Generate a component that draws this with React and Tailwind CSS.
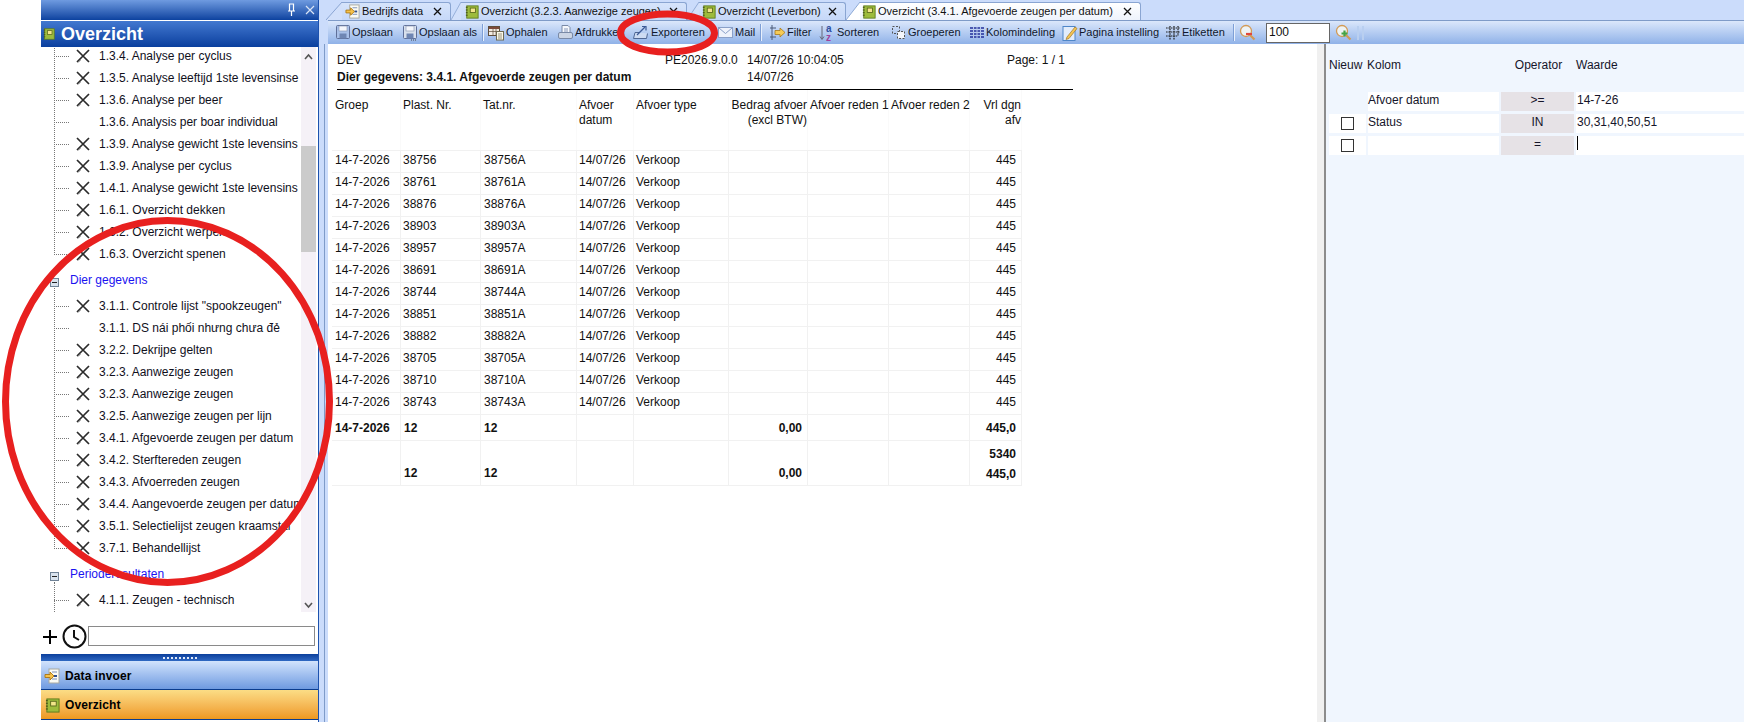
const FONT = "font-['Liberation_Sans',Arial,sans-serif]"

const Notebook = ({ size = 16 }) => (
  <svg width={size} height={size} viewBox="0 0 16 16" className="shrink-0">
    <rect x="2" y="1" width="13" height="14" fill="#9dbb3c" stroke="#5c7a1c" />
    <rect x="1" y="2" width="2" height="1.4" fill="#4c5c1c" />
    <rect x="1" y="5" width="2" height="1.4" fill="#4c5c1c" />
    <rect x="1" y="8" width="2" height="1.4" fill="#4c5c1c" />
    <rect x="1" y="11" width="2" height="1.4" fill="#4c5c1c" />
    <rect x="6" y="3.5" width="6" height="5" fill="#f2e58a" stroke="#5c6a1c" />
  </svg>
)

const DataIcon = ({ size = 16 }) => (
  <svg width={size} height={size} viewBox="0 0 16 16" className="shrink-0">
    <rect x="5" y="1" width="10" height="14" fill="#fbfbf4" stroke="#a9a9a0" />
    <path d="M8 4h5M8 11h5" stroke="#7b8fb8" />
    <path d="M10 7h3v2h-3z" fill="#33508c" />
    <path d="M1 6.500h5V4l4 4-4 4V9.500H1z" fill="#f6c24a" stroke="#a97412" strokeWidth="0.9" />
  </svg>
)

const CrossIcon = () => (
  <svg width="14" height="14" viewBox="0 0 14 14" className="shrink-0">
    <path d="M1 1 13 13M13 1 1 13" stroke="#2b2b2b" strokeWidth="1.700" />
    <path d="M2 13.500 4.500 11" stroke="#777" strokeWidth="1" />
  </svg>
)

const TabClose = ({ className = '' }) => (
  <svg width="9" height="9" viewBox="0 0 9 9" className={`shrink-0 ${className}`}>
    <path d="M1 1 8 8M8 1 1 8" stroke="#111" strokeWidth="1.300" />
  </svg>
)

function ToolIcon({ kind }) {
  if (kind === 'save' || kind === 'saveas')
    return (
      <svg width="16" height="17" viewBox="0 0 16 17">
        <rect x="1.500" y="1.500" width="13" height="13" rx="1" fill={kind === 'save' ? '#a9c0e8' : '#d8e0ec'} stroke="#5f6f98" />
        <rect x="4" y="2" width="8" height="5" fill="#f4f6fb" stroke="#8391ae" strokeWidth="0.6" />
        <rect x="4.500" y="9.500" width="7" height="5" fill="#6f86b3" />
        {kind === 'saveas' && <path d="M9 16h1M11 16h1M13 16h1" stroke="#444" />}
      </svg>
    )
  if (kind === 'fetch')
    return (
      <svg width="17" height="17" viewBox="0 0 17 17">
        <rect x="0.500" y="2.500" width="11" height="9" fill="#f2ece2" stroke="#5e4d3b" />
        <rect x="1" y="3" width="10" height="2" fill="#7d4a3a" />
        <path d="M1 7.500h10M5 5v6M8 5v6" stroke="#5e4d3b" strokeWidth="0.7" />
        <rect x="8.500" y="7.500" width="7" height="8.500" fill="#fbf8e8" stroke="#6e6a52" />
        <path d="M10 10h4M10 12h4M10 14h4" stroke="#6e6a52" strokeWidth="0.7" />
      </svg>
    )
  if (kind === 'print')
    return (
      <svg width="17" height="17" viewBox="0 0 17 17">
        <path d="M5 1.500h6l2 2v6H5z" fill="#f6f8fc" stroke="#7a8aa6" />
        <path d="M7 5h4M7 7h4" stroke="#6f82a8" strokeWidth="0.8" />
        <rect x="1.500" y="8.500" width="14" height="6" rx="1.500" fill="#ccd5e4" stroke="#7a8aa6" />
      </svg>
    )
  if (kind === 'export')
    return (
      <svg width="17" height="17" viewBox="0 0 17 17">
        <path d="M6 8.500H2L.500 14.500h13l1-5" fill="#cddbf2" stroke="#4f6794" />
        <path d="M4 11 12 3" stroke="#3c5a96" strokeWidth="1.200" />
        <path d="M9 2.500h4v4" fill="none" stroke="#3c5a96" strokeWidth="1.200" />
      </svg>
    )
  if (kind === 'mail')
    return (
      <svg width="16" height="14" viewBox="0 0 16 14">
        <rect x="0.500" y="1.500" width="14" height="10" fill="#eef2fb" stroke="#8aa0c8" />
        <path d="M1 2 7.500 7.500 14 2" fill="none" stroke="#8aa0c8" />
      </svg>
    )
  if (kind === 'filter')
    return (
      <svg width="17" height="17" viewBox="0 0 17 17">
        <path d="M3 1v15M1 4h6M1 13h6" stroke="#4a5a78" />
        <path d="M6 6.500h5V4l5 4.500-5 4.500v-2.500H6z" fill="#f6cb55" stroke="#a87a1c" strokeWidth="0.8" />
      </svg>
    )
  if (kind === 'sort')
    return (
      <svg width="17" height="18" viewBox="0 0 17 18">
        <path d="M3 2v13M1 12.500 3 15.500 5 12.500" fill="none" stroke="#667" />
        <text x="7" y="8" fontSize="10" fontWeight="700" fontFamily="Liberation Sans" fill="#2f4fa0">a</text>
        <text x="7" y="17" fontSize="10" fontWeight="700" fontFamily="Liberation Sans" fill="#a0409a">z</text>
      </svg>
    )
  if (kind === 'group')
    return (
      <svg width="16" height="16" viewBox="0 0 16 16">
        <rect x="1.500" y="1.500" width="7" height="7" fill="none" stroke="#555" strokeDasharray="2 1.500" />
        <rect x="6.500" y="6.500" width="7" height="7" fill="#f4f6fb" stroke="#555" strokeDasharray="2 1.500" />
      </svg>
    )
  if (kind === 'columns')
    return (
      <svg width="16" height="14" viewBox="0 0 16 14">
        <path d="M1 2h14M1 5h14M1 8h14M1 11h14" stroke="#25309a" strokeWidth="1.400" />
        <path d="M4.500 1v11M8 1v11M11.500 1v11" stroke="#b8c8ea" />
      </svg>
    )
  if (kind === 'page')
    return (
      <svg width="16" height="18" viewBox="0 0 16 18">
        <rect x="1" y="2.500" width="12" height="14" fill="#e2ecfb" stroke="#4f86c8" />
        <path d="M5 13 13 3l2 1.500L7 14.500l-3 1z" fill="#f4c553" stroke="#a0762a" strokeWidth="0.7" />
      </svg>
    )
  if (kind === 'labels')
    return (
      <svg width="16" height="16" viewBox="0 0 16 16">
        <path d="M1 3h14M1 7h14M1 11h12" stroke="#222" strokeWidth="1.200" strokeDasharray="1.600 0.800" />
        <path d="M5 1v14M9 1v14M13 1v10" stroke="#222" strokeWidth="1.200" strokeDasharray="1.600 0.800" />
      </svg>
    )
  return null
}

const Zoom = ({ plus }) => (
  <svg width="17" height="17" viewBox="0 0 17 17" className="shrink-0">
    <circle cx="7" cy="7" r="5.500" fill="#eef3f4" stroke="#d29a55" strokeWidth="1.300" />
    <path d="M11 11 15.500 15.500" stroke="#d29a55" strokeWidth="2.200" />
    {plus ? (
      <path d="M9.500 6.500v6M6.500 9.500h6" stroke="#45a345" strokeWidth="2.200" />
    ) : (
      <path d="M7 10h6" stroke="#e0473d" strokeWidth="2.200" />
    )}
  </svg>
)

const TOOLS = [
  { kind: 'save', label: 'Opslaan', w: 'w-[67px]' },
  { kind: 'saveas', label: 'Opslaan als', w: 'w-[81px]', sep: 'w-[6px]' },
  { kind: 'fetch', label: 'Ophalen', w: 'w-[69px]' },
  { kind: 'print', label: 'Afdrukken', w: 'w-[76px]' },
  { kind: 'export', label: 'Exporteren', w: 'w-[84px]' },
  { kind: 'mail', label: 'Mail', w: 'w-[43px]', sep: 'w-[9px]' },
  { kind: 'filter', label: 'Filter', w: 'w-[50px]' },
  { kind: 'sort', label: 'Sorteren', w: 'w-[71px]' },
  { kind: 'group', label: 'Groeperen', w: 'w-[78px]' },
  { kind: 'columns', label: 'Kolomindeling', w: 'w-[93px]' },
  { kind: 'page', label: 'Pagina instelling', w: 'w-[103px]' },
  { kind: 'labels', label: 'Etiketten', w: 'w-[69px]', sep: 'w-[6px]' },
]

const TABS = [
  { icon: 'data', label: 'Bedrijfs data', box: 'w-[109px] ml-[23px] pl-[3px]', slant: 'w-[16px] -left-[16px]' },
  { icon: 'note', label: 'Overzicht (3.2.3. Aanwezige zeugen)', box: 'w-[226px] ml-[10px] pl-[4px]', slant: 'w-[10px] -left-[10px]' },
  { icon: 'note', label: 'Overzicht (Leverbon)', box: 'w-[147px] ml-[12px] pl-[3px]', slant: 'w-[12px] -left-[12px]' },
  { icon: 'note', label: 'Overzicht (3.4.1. Afgevoerde zeugen per datum)', box: 'w-[281px] ml-[14px] pl-[2px]', slant: 'w-[14px] -left-[14px]', active: true },
]

const TREE_TOP = [
  ['1.3.4. Analyse per cyclus', true],
  ['1.3.5. Analyse leeftijd 1ste levensinse', true],
  ['1.3.6. Analyse per beer', true],
  ['1.3.6. Analysis per boar individual', false],
  ['1.3.9. Analyse gewicht 1ste levensins', true],
  ['1.3.9. Analyse per cyclus', true],
  ['1.4.1. Analyse gewicht 1ste levensins', true],
  ['1.6.1. Overzicht dekken', true],
  ['1.6.2. Overzicht werpen', true],
  ['1.6.3. Overzicht spenen', true],
]

const TREE_DIER = [
  ['3.1.1. Controle lijst "spookzeugen"', true],
  ['3.1.1. DS nái phối nhưng chưa đẻ', false],
  ['3.2.2. Dekrijpe gelten', true],
  ['3.2.3. Aanwezige zeugen', true],
  ['3.2.3. Aanwezige zeugen', true],
  ['3.2.5. Aanwezige zeugen per lijn', true],
  ['3.4.1. Afgevoerde zeugen per datum', true],
  ['3.4.2. Sterftereden zeugen', true],
  ['3.4.3. Afvoerreden zeugen', true],
  ['3.4.4. Aangevoerde zeugen per datum', true],
  ['3.5.1. Selectielijst zeugen kraamstal', true],
  ['3.7.1. Behandellijst', true],
]

const ROWS = ['38756', '38761', '38876', '38903', '38957', '38691', '38744', '38851', '38882', '38705', '38710', '38743']

const GRID = 'grid grid-cols-[69px_80px_96px_57px_95px_79px_81px_81px_52px] w-[690px]'
const CELL = 'border-r border-[#f1f1f1] px-[3px]'
const HEAD = 'pt-[8px] leading-[15px] border-r border-[#fafafa] whitespace-nowrap'

function TreeItem({ label, cross }) {
  return (
    <div className="flex items-center h-[22px] pl-[13px]">
      <span className="w-[15px] shrink-0 border-t border-dotted border-[#777]" />
      <span className="w-[7px] shrink-0" />
      {cross ? <CrossIcon /> : <span className="w-[14px] shrink-0" />}
      <span className="ml-[9px] whitespace-nowrap text-[#10101c]">{label}</span>
    </div>
  )
}

function TreeGroup({ label }) {
  return (
    <div className="flex items-center h-[30px] relative">
      <span className="absolute left-[9px] top-[13px] w-[9px] h-[9px] bg-[#d9e3ee] border border-[#6f8296] flex items-center justify-center">
        <span className="w-[5px] h-px bg-[#222]" />
      </span>
      <span className="ml-[29px] text-[#1a12f0]">{label}</span>
    </div>
  )
}

function TreeSection({ items, lineClass }) {
  return (
    <div className="relative">
      <span className={`absolute left-[13px] border-l border-dotted border-[#777] ${lineClass}`} />
      {items.map(([l, c], i) => <TreeItem key={i} label={l} cross={c} />)}
    </div>
  )
}

function Sidebar() {
  return (
    <aside className="w-[277px] shrink-0 flex flex-col h-[722px]">
      <div className="h-[20px] bg-gradient-to-b from-[#6f9be0] to-[#0c429f] flex items-center justify-end pr-[3px] gap-[9px] shrink-0">
        <svg width="9" height="14" viewBox="0 0 9 14">
          <path d="M2.500 1h4v7h-4zM1 8h7M4.500 8v5" fill="none" stroke="#fff" strokeWidth="1.200" />
        </svg>
        <svg width="10" height="10" viewBox="0 0 10 10">
          <path d="M1 1 9 9M9 1 1 9" stroke="#d9e4f6" strokeWidth="1.200" />
        </svg>
      </div>
      <div className="h-[26px] mt-px bg-gradient-to-b from-[#4278d0] to-[#093f9e] flex items-center pl-[2px] gap-[6px] shrink-0">
        <Notebook size={12} />
        <span className="text-[18px] font-bold text-white leading-none">Overzicht</span>
      </div>
      <div className="h-[565px] flex relative shrink-0 overflow-hidden">
        <div className="flex-1 min-w-0 overflow-hidden relative">
          <div className="-mt-[2px]">
            <TreeSection items={TREE_TOP} lineClass="top-0 bottom-[10px]" />
            <TreeGroup label="Dier gegevens" />
            <div className="-mt-[7px] pt-[7px]">
              <TreeSection items={TREE_DIER} lineClass="-top-[7px] bottom-[10px]" />
            </div>
            <TreeGroup label="Perioderesultaten" />
            <TreeSection items={[['4.1.1. Zeugen - technisch', true]]} lineClass="-top-[7px] -bottom-[13px]" />
          </div>
        </div>
        <div className="w-[15px] bg-[#f5f1f7] flex flex-col items-center relative shrink-0">
          <svg width="9" height="7" viewBox="0 0 9 7" className="mt-[6px]"><path d="M1 6l3.500-4L8 6" fill="none" stroke="#555" strokeWidth="1.600" /></svg>
          <div className="w-full h-[106px] bg-[#cbcbcb] mt-[86px]" />
          <svg width="9" height="7" viewBox="0 0 9 7" className="mt-auto mb-[3px]"><path d="M1 1l3.500 4L8 1" fill="none" stroke="#555" strokeWidth="1.600" /></svg>
        </div>
        <div className="w-[2px]" />
      </div>
      <div className="h-[42px] flex items-end pb-[8px] shrink-0">
        <svg width="16" height="16" viewBox="0 0 16 16" className="ml-[1px] mb-[1px]"><path d="M8 1v14M1 8h14" stroke="#000" strokeWidth="2" /></svg>
        <svg width="25" height="25" viewBox="0 0 25 25" className="ml-[4px] -mb-[3px]">
          <circle cx="12.500" cy="12.500" r="11" fill="#fff" stroke="#111" strokeWidth="2" />
          <path d="M12 6v7l5 3" fill="none" stroke="#111" strokeWidth="2" />
        </svg>
        <div className="ml-[1px] w-[227px] h-[20px] bg-white border border-[#8a8a8a]" />
      </div>
      <div className="h-[7px] bg-gradient-to-b from-[#0b3f9c] to-[#2f68c2] flex items-center justify-center shrink-0">
        <span className="w-[34px] border-t-2 border-dotted border-[#dfe8f8]" />
      </div>
      <div className="h-[29px] pt-px bg-gradient-to-b from-[#d2e3fc] to-[#6f9ae0] border-b border-[#0b3c8e] flex items-center pl-[3px] gap-[5px] shrink-0">
        <DataIcon />
        <span className="font-bold text-[12px] text-black tracking-[0.1px]">Data invoer</span>
      </div>
      <div className="h-[30px] pt-px bg-gradient-to-b from-[#fbdd85] to-[#ee981c] border-b border-[#0b3c8e] flex items-center pl-[4px] gap-[5px] shrink-0">
        <Notebook size={15} />
        <span className="font-bold text-[12px] text-black tracking-[0.1px]">Overzicht</span>
      </div>
    </aside>
  )
}

function Tab({ tab }) {
  return (
    <div className={`relative mt-[2px] h-[18px] flex items-center ${tab.box} ${tab.active ? 'bg-gradient-to-b from-white to-[#eef3fc]' : 'bg-gradient-to-b from-[#d6e4fb] to-[#c6d8f8]'} border-t border-r border-[#8aa5d2] rounded-tr-[3px]`}>
      <svg viewBox="0 0 16 18" preserveAspectRatio="none" className={`absolute -top-px h-[18px] ${tab.slant}`}>
        <path d="M0 18 16 0v18z" fill={tab.active ? '#fff' : '#d2e0fa'} />
        <path d="M0 18 16 0" fill="none" stroke="#8aa5d2" />
      </svg>
      {tab.icon === 'data' ? <DataIcon size={15} /> : <Notebook size={14} />}
      <span className="ml-[2px] whitespace-nowrap text-[11px] text-[#111]">{tab.label}</span>
      <TabClose className="ml-auto mr-[8px]" />
    </div>
  )
}

function Toolbar() {
  return (
    <div className="h-[24px] ml-[9px] pl-[6px] bg-gradient-to-b from-[#dbe7fb] to-[#90b2e8] border-t border-[#7f9bc8] flex items-center shrink-0">
      {TOOLS.map(t => (
        <div key={t.label} className="contents">
          <div className={`flex items-center gap-[1px] shrink-0 ${t.w}`}>
            <span className="w-[17px] flex justify-center shrink-0"><ToolIcon kind={t.kind} /></span>
            <span className="whitespace-nowrap text-[11px] text-[#10182c]">{t.label}</span>
          </div>
          {t.sep && (
            <span className={`shrink-0 flex ${t.sep}`}>
              <span className="w-[2px] h-[17px] border-l border-[#7e9fd6] bg-[#e8f0fc]" />
            </span>
          )}
        </div>
      ))}
      <Zoom />
      <div className="ml-[10px] w-[64px] h-[20px] bg-white border border-[#666] text-[12px] leading-[17px] pl-[2px]">100</div>
      <span className="ml-[5px]"><Zoom plus /></span>
      <span className="ml-[5px] w-[7px] h-[14px] border-x-2 border-[#b9cff0]" />
    </div>
  )
}

function Report() {
  return (
    <div className="flex-1 min-w-0 bg-white pt-[7px] overflow-hidden">
      <div className="ml-[9px] w-[736px]">
        <div className="flex h-[17px] items-center">
          <span className="w-[328px]">DEV</span>
          <span className="w-[82px]">PE2026.9.0.0</span>
          <span className="w-[260px]">14/07/26 10:04:05</span>
          <span>Page: 1 / 1</span>
        </div>
        <div className="flex h-[17px] items-center">
          <span className="w-[410px] font-bold">Dier gegevens: 3.4.1. Afgevoerde zeugen per datum</span>
          <span>14/07/26</span>
        </div>
        <div className="mt-[4px] border-b border-black" />
      </div>
      <div className="ml-[4px]">
        <div className={`${GRID} h-[60px]`}>
          <div className={`${HEAD} pl-[3px]`}>Groep</div>
          <div className={`${HEAD} pl-[2px]`}>Plast. Nr.</div>
          <div className={`${HEAD} pl-[2px]`}>Tat.nr.</div>
          <div className={`${HEAD} pl-[2px]`}>Afvoer<br />datum</div>
          <div className={`${HEAD} pl-[2px]`}>Afvoer type</div>
          <div className={`${HEAD} text-right`}>Bedrag afvoer<br />(excl BTW)</div>
          <div className={`${HEAD} pl-[2px]`}>Afvoer reden 1</div>
          <div className={`${HEAD} pl-[2px]`}>Afvoer reden 2</div>
          <div className={`${HEAD} text-right`}>Vrl dgn<br />afv</div>
        </div>
        {ROWS.map(n => (
          <div key={n} className={`${GRID} h-[22px] border-t border-[#f1f1f1] leading-[15px]`}>
            <div className={`${CELL} pt-[2px] whitespace-nowrap`}>14-7-2026</div>
            <div className={`${CELL} pt-[2px] !px-[2px]`}>{n}</div>
            <div className={`${CELL} pt-[2px]`}>{n}A</div>
            <div className={`${CELL} pt-[2px] !px-[2px]`}>14/07/26</div>
            <div className={`${CELL} pt-[2px] !px-[2px]`}>Verkoop</div>
            <div className={CELL} />
            <div className={CELL} />
            <div className={CELL} />
            <div className={`${CELL} pt-[2px] text-right !pr-[5px]`}>445</div>
          </div>
        ))}
        <div className={`${GRID} h-[26px] border-t border-[#f1f1f1] font-bold leading-[15px]`}>
          <div className={`${CELL} pt-[6px] whitespace-nowrap`}>14-7-2026</div>
          <div className={`${CELL} pt-[6px]`}>12</div>
          <div className={`${CELL} pt-[6px]`}>12</div>
          <div className={CELL} />
          <div className={CELL} />
          <div className={`${CELL} pt-[6px] text-right !pr-[5px]`}>0,00</div>
          <div className={CELL} />
          <div className={CELL} />
          <div className={`${CELL} pt-[6px] text-right !pr-[5px]`}>445,0</div>
        </div>
        <div className={`${GRID} h-[46px] border-y border-[#f1f1f1] font-bold leading-[15px]`}>
          <div className={CELL} />
          <div className={`${CELL} pt-[25px]`}>12</div>
          <div className={`${CELL} pt-[25px]`}>12</div>
          <div className={CELL} />
          <div className={CELL} />
          <div className={`${CELL} pt-[25px] text-right !pr-[5px]`}>0,00</div>
          <div className={CELL} />
          <div className={CELL} />
          <div className={`${CELL} pt-[3px] text-right !pr-[5px] leading-[20px]`}>5340<br />445,0</div>
        </div>
      </div>
    </div>
  )
}

function FilterPanel() {
  const rows = [
    { check: false, kolom: 'Afvoer datum', op: '>=', val: '14-7-26' },
    { check: true, kolom: 'Status', op: 'IN', val: '30,31,40,50,51' },
    { check: true, kolom: '', op: '=', val: '', caret: true },
  ]
  return (
    <div className="w-[418px] shrink-0 bg-[#f0f6fe] pl-[3px] text-[#15152a]">
      <div className="flex h-[48px] pt-[14px] leading-[15px]">
        <span className="w-[38px]">Nieuw</span>
        <span className="w-[135px]">Kolom</span>
        <span className="w-[73px] text-center">Operator</span>
        <span className="pl-px">Waarde</span>
      </div>
      <div className="flex flex-col gap-[3px]">
        {rows.map((r, i) => (
          <div key={i} className="flex h-[19px] gap-[2px]">
            <div className={`w-[37px] flex items-center justify-center ${r.check ? 'bg-white' : ''}`}>
              {r.check && <span className="w-[13px] h-[13px] border border-[#333] bg-white" />}
            </div>
            <div className="w-[131px] bg-white leading-[16px]">{r.kolom}</div>
            <div className="w-[73px] bg-[#e6e2e6] text-center leading-[17px]">{r.op}</div>
            <div className="flex-1 bg-white leading-[16px] pl-px">
              {r.val}
              {r.caret && <span className="inline-block w-px h-[14px] bg-black" />}
            </div>
          </div>
        ))}
      </div>
    </div>
  )
}

export default function App() {
  return (
    <div className={`${FONT} relative flex w-[1744px] h-[722px] overflow-hidden bg-white text-[12px] text-[#111] pl-[41px]`}>
      <Sidebar />
      <div className="w-px bg-[#1d52ae] shrink-0" />
      <div className="flex-1 min-w-0 flex flex-col bg-[#cbdcfb] h-[722px]">
        <div className="h-[20px] flex shrink-0 relative">
          {TABS.map(t => <Tab key={t.label} tab={t} />)}
        </div>
        <Toolbar />
        <div className="flex-1 min-h-0 flex ml-[5px] border-l border-[#7f9bc8] pl-[3px] bg-[#cbdcfb]">
          <div className="flex-1 min-w-0 flex">
            <Report />
            <div className="w-[9px] shrink-0 bg-[#f0f0f0] border-r-2 border-[#8c8c8c]" />
            <FilterPanel />
          </div>
        </div>
      </div>

      {/* red marker rings drawn over the screenshot */}
      <svg width="1744" height="722" className="absolute inset-0 pointer-events-none">
        <ellipse cx="167.500" cy="401.500" rx="162" ry="181" fill="none" stroke="#e8201f" strokeWidth="7" />
        <ellipse cx="667.500" cy="33" rx="47" ry="19" fill="none" stroke="#e8201f" strokeWidth="7" />
      </svg>
    </div>
  )
}
